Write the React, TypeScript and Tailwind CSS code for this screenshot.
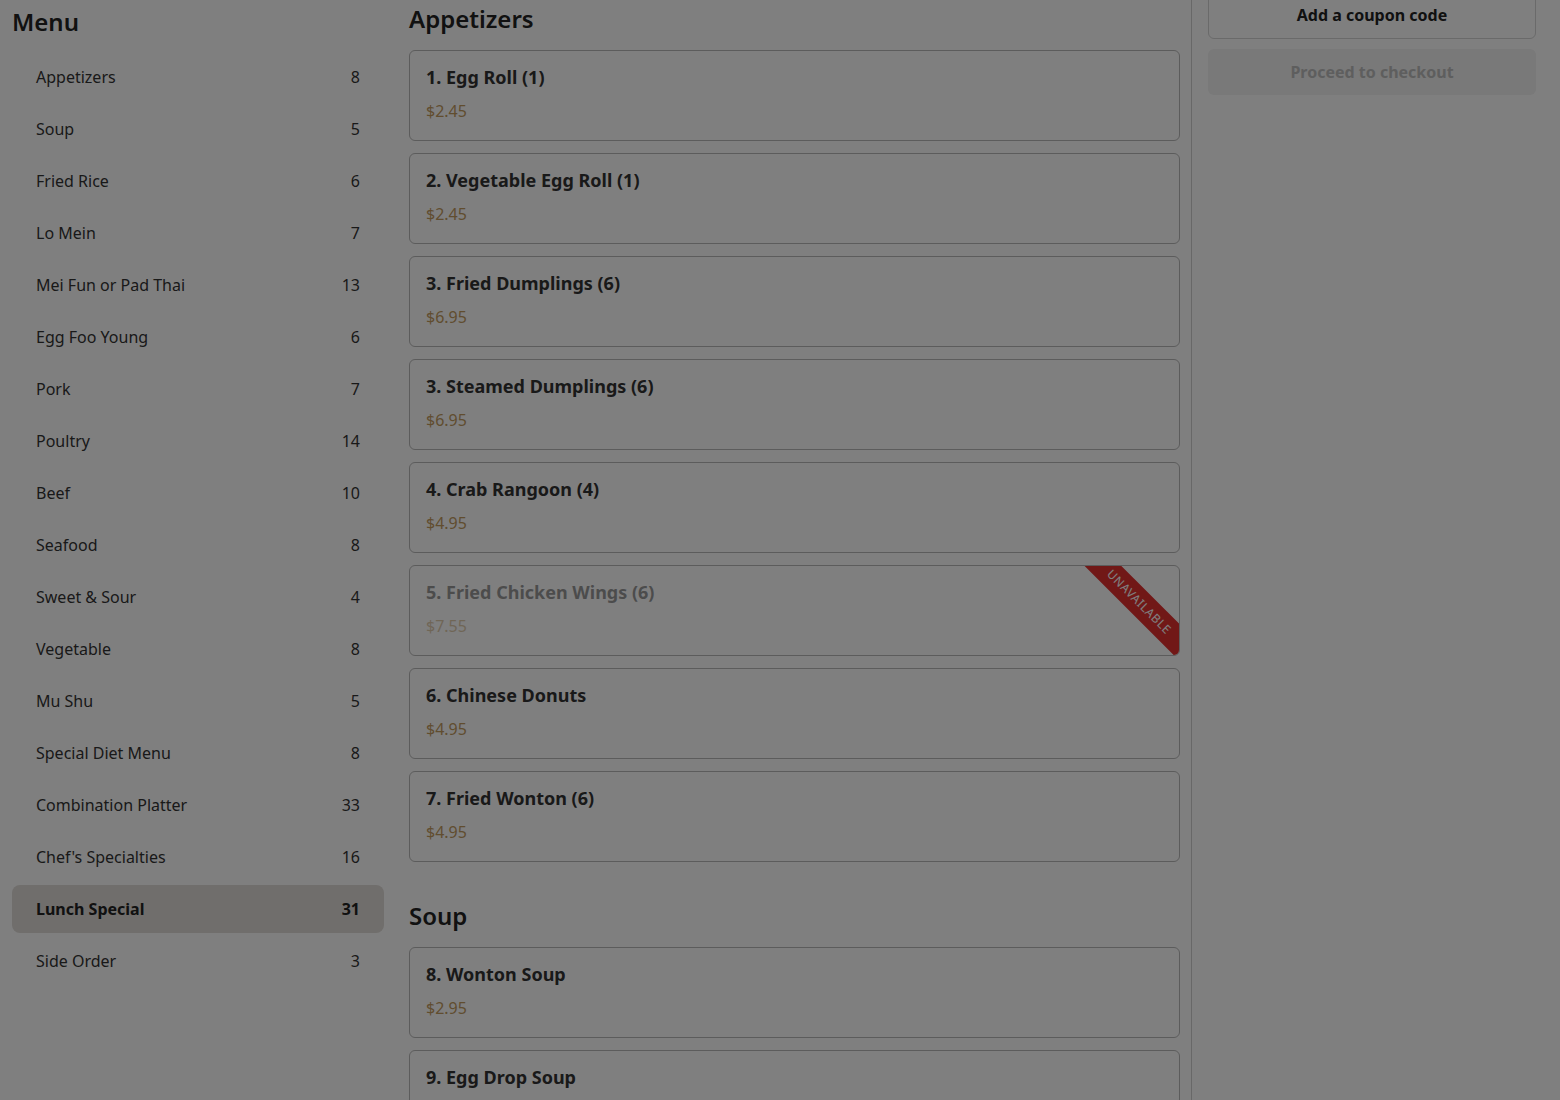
const categories = [
  { name: 'Appetizers', count: 8 },
  { name: 'Soup', count: 5 },
  { name: 'Fried Rice', count: 6 },
  { name: 'Lo Mein', count: 7 },
  { name: 'Mei Fun or Pad Thai', count: 13 },
  { name: 'Egg Foo Young', count: 6 },
  { name: 'Pork', count: 7 },
  { name: 'Poultry', count: 14 },
  { name: 'Beef', count: 10 },
  { name: 'Seafood', count: 8 },
  { name: 'Sweet & Sour', count: 4 },
  { name: 'Vegetable', count: 8 },
  { name: 'Mu Shu', count: 5 },
  { name: 'Special Diet Menu', count: 8 },
  { name: 'Combination Platter', count: 33 },
  { name: "Chef's Specialties", count: 16 },
  { name: 'Lunch Special', count: 31 },
  { name: 'Side Order', count: 3 },
];

interface Dish {
  name: string;
  price: string;
  unavailable?: boolean;
}

const sections: { title: string; items: Dish[] }[] = [
  {
    title: 'Appetizers',
    items: [
      { name: '1. Egg Roll (1)', price: '$2.45' },
      { name: '2. Vegetable Egg Roll (1)', price: '$2.45' },
      { name: '3. Fried Dumplings (6)', price: '$6.95' },
      { name: '3. Steamed Dumplings (6)', price: '$6.95' },
      { name: '4. Crab Rangoon (4)', price: '$4.95' },
      { name: '5. Fried Chicken Wings (6)', price: '$7.55', unavailable: true },
      { name: '6. Chinese Donuts', price: '$4.95' },
      { name: '7. Fried Wonton (6)', price: '$4.95' },
    ],
  },
  {
    title: 'Soup',
    items: [
      { name: '8. Wonton Soup', price: '$2.95' },
      { name: '9. Egg Drop Soup', price: '$2.95' },
      { name: '10. Hot & Sour Soup', price: '$2.95' },
    ],
  },
];

function DishCard({ dish }: { dish: Dish }) {
  return (
    <div className="relative overflow-hidden rounded-md border border-[#b8b8b8] bg-white px-4 pt-[14px] pb-[17px]">
      <div className={dish.unavailable ? 'opacity-50' : ''}>
        <div className="text-lg leading-6 font-bold text-[#333]">{dish.name}</div>
        <div className="mt-2.5 text-base leading-6 text-[#c29a5e]">{dish.price}</div>
      </div>
      {dish.unavailable && (
        <div className="absolute top-0 right-0 h-[92px] w-[96px] overflow-hidden">
          <div className="absolute top-[23px] right-[-42px] w-[164px] rotate-45 bg-[#e2302f] py-[5px] text-center text-[12px] leading-[16px] tracking-wider text-white uppercase">
            Unavailable
          </div>
        </div>
      )}
    </div>
  );
}

export default function App() {
  return (
    <div className="relative h-screen overflow-hidden bg-white font-['Noto_Sans',sans-serif] text-[#333]">
      <div className="flex h-full pl-3">
        {/* category nav */}
        <aside className="w-[372px] shrink-0">
          <h2 className="pt-1.5 text-2xl leading-8 font-semibold text-[#222]">Menu</h2>
          <ul className="mt-[15px] flex flex-col gap-1">
            {categories.map((c) => {
              const active = c.name === 'Lunch Special';
              return (
                <li
                  key={c.name}
                  className={`flex h-12 items-center justify-between rounded-lg px-6 text-base ${
                    active ? 'bg-[#e0dcd8] font-bold text-[#222]' : 'text-[#333]'
                  }`}
                >
                  <span>{c.name}</span>
                  <span>{c.count}</span>
                </li>
              );
            })}
          </ul>
        </aside>

        {/* dishes */}
        <main className="ml-[25px] flex w-[771px] shrink-0 flex-col gap-[35px]">
          {sections.map((s) => (
            <section key={s.title} className="pt-[3px]">
              <h2 className="mb-[15px] text-2xl leading-8 font-semibold text-[#222]">{s.title}</h2>
              <div className="flex flex-col gap-3">
                {s.items.map((d) => (
                  <DishCard key={d.name} dish={d} />
                ))}
              </div>
            </section>
          ))}
        </main>

        {/* cart */}
        <aside className="ml-[11px] flex-1 border-l border-[#d0d0d0] pr-6 pl-4">
          <div className="flex flex-col gap-2.5">
            <button className="-mt-[9px] h-12 rounded-md border border-[#d4d4d4] text-base font-bold text-[#222]">
              Add a coupon code
            </button>
            <button className="h-[46px] rounded-md bg-[#f2f2f2] text-base font-bold text-[#bdbdbd]">
              Proceed to checkout
            </button>
          </div>
        </aside>
      </div>

      {/* modal backdrop */}
      <div className="fixed inset-0 bg-black/50" />
    </div>
  );
}
